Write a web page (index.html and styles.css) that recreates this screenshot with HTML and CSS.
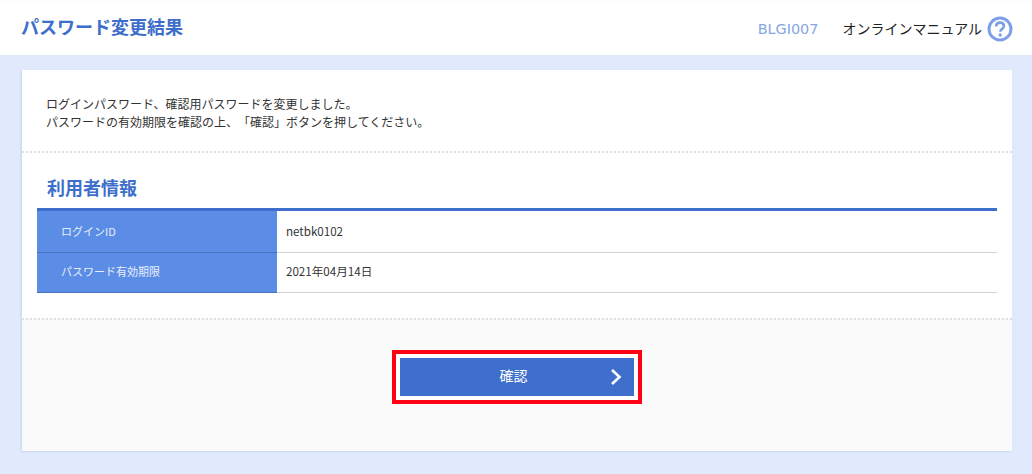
FILE: index.html
```html
<!DOCTYPE html>
<html lang="ja">
<head>
<meta charset="utf-8">
<title>パスワード変更結果</title>
<link rel="stylesheet" href="styles.css">
</head>
<body>
<header class="header">
  <h1 class="title">パスワード変更結果</h1>
  <div class="header-right">
    <span class="code">BLGI007</span>
    <a class="manual">オンラインマニュアル
      <svg class="help" width="26" height="26" viewBox="0 0 26 26"><circle cx="13" cy="13" r="11" fill="#fff" stroke="#7d9fe6" stroke-width="3"/><path d="M9.2 10.4c0-2.4 1.7-3.8 3.9-3.8s3.8 1.3 3.8 3.4c0 1.5-.8 2.3-1.9 3.1-1.1.8-1.7 1.3-1.7 2.6" fill="none" stroke="#7d9fe6" stroke-width="2.6"/><circle cx="13.2" cy="19" r="1.7" fill="#7d9fe6"/></svg>
    </a>
  </div>
</header>
<main class="card">
  <section class="message">
    <p>ログインパスワード、確認用パスワードを変更しました。</p>
    <p>パスワードの有効期限を確認の上、「確認」ボタンを押してください。</p>
  </section>
  <section class="info">
    <h2 class="info-title">利用者情報</h2>
    <table class="table">
      <tr><th>ログインID</th><td>netbk0102</td></tr>
      <tr><th>パスワード有効期限</th><td>2021年04月14日</td></tr>
    </table>
  </section>
  <section class="actions">
    <div class="btn-frame">
      <button class="btn">確認
        <svg class="chev" width="12" height="18" viewBox="0 0 12 18"><path d="M2 2l7.5 7L2 16" fill="none" stroke="#fff" stroke-width="2.6"/></svg>
      </button>
    </div>
  </section>
</main>
</body>
</html>
```
FILE: styles.css
```css
* { box-sizing: border-box; }
html, body { margin: 0; padding: 0; }
body {
  background: #e1eafc;
  height: 474px;
  overflow: hidden;
  font-family: "Noto Sans CJK JP", "Liberation Sans", sans-serif;
  color: #333;
  text-spacing-trim: space-all;
}
.header {
  height: 55px;
  background: #fff;
  border-top: 3px solid #fdfdfd;
  display: flex;
  align-items: center;
  justify-content: space-between;
  padding: 0 19px 0 21px;
  margin-bottom: 15px;
}
.title {
  margin: 0 0 7px;
  font-size: 18px;
  font-weight: 700;
  color: #3d6ecb;
}
.header-right { display: flex; align-items: center; margin-top: -1px; }
.code {
  font-family: "DejaVu Sans", sans-serif;
  font-size: 14.4px;
  color: #86a6e4;
  margin-right: 24px;
}
.manual {
  display: flex;
  align-items: center;
  gap: 5px;
  font-size: 14px;
  color: #222;
  padding-bottom: 1px;
}
.help { margin-top: 1px; }
.card {
  margin: 0 20px 0 22px;
  height: 381px;
  background: #fff;
  box-shadow: -1px 1px 2px #c9d3e8;
  display: flex;
  flex-direction: column;
}
.message {
  height: 83px;
  padding: 25px 24px 0 24px;
  border-bottom: 2px dotted #e0e0e0;
  font-size: 12px;
  line-height: 18px;
}
.message p { margin: 0; }
.info { height: 165px; padding: 0 15px; }
.info-title {
  margin: 0;
  height: 55px;
  padding: 21px 0 0 10px;
  font-size: 18px;
  line-height: 26px;
  font-weight: 700;
  color: #3d6ecb;
}
.table {
  width: 100%;
  border-collapse: separate;
  border-spacing: 0;
  border-top: 3px solid #3d6ecb;
  font-size: 11px;
}
.table th {
  width: 240px;
  height: 42px;
  background: #5b8ce6;
  color: #e8effb;
  font-weight: 400;
  text-align: left;
  padding: 0 0 2px 24px;
  border-bottom: 1px solid #4a72bd;
}
.table tr + tr th, .table tr + tr td { height: 40px; padding-bottom: 4px; }
.table td {
  padding: 0 0 2px 9px;
  border-bottom: 1px solid #d4d4d4;
  color: #333;
  font-size: 11.6px;
}
.actions {
  flex: 1;
  background: #fafafa;
  border-top: 2px dotted #e0e0e0;
  padding-top: 30px;
  display: flex;
  justify-content: center;
  align-items: flex-start;
}
.btn-frame {
  width: 250px;
  height: 54px;
  border: 4px solid #ff0014;
  background: #fff;
  padding: 4px;
}
.btn {
  position: relative;
  width: 100%;
  height: 100%;
  margin: 0;
  padding: 0 7px 4px 0;
  border: 0;
  background: #3e6fcc;
  color: #fff;
  font: 400 14px "Noto Sans CJK JP", sans-serif;
  display: block;
}
.chev {
  position: absolute;
  right: 12px;
  top: 10px;
}
```
